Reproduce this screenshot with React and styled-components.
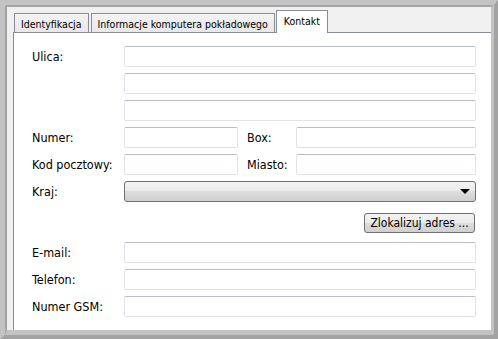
import React from "react";
import styled, { createGlobalStyle } from "styled-components";

const GlobalStyle = createGlobalStyle`
  html, body {
    margin: 0;
    padding: 0;
    background: #f0f0f0;
  }
  body {
    font-family: "DejaVu Sans Condensed", "DejaVu Sans", sans-serif;
    font-stretch: condensed;
    font-size: 12.5px;
    color: #000;
  }
`;

const Frame = styled.div`
  box-sizing: border-box;
  width: 498px;
  height: 339px;
  border-style: solid;
  border-width: 5px 4px 4px 5px;
  border-color: #c3c3c3 #a3a3a3 #a3a3a3 #c3c3c3;
`;

const Bevel = styled.div`
  box-sizing: border-box;
  height: 100%;
  border-style: solid;
  border-width: 2px 3px 5px 2px;
  border-color: #a3a3a3 #c3c3c3 #c3c3c3 #a3a3a3;
  background: #f0f0f0;
  display: flex;
  flex-direction: column;
  padding-left: 6px;
`;

const TabStrip = styled.div`
  height: 25px;
  display: flex;
  align-items: flex-end;
  padding-left: 1px;
  gap: 2px;
  position: relative;
  z-index: 1;
`;

const Tab = styled.div`
  box-sizing: border-box;
  height: ${({ $active }) => ($active ? "23px" : "19px")};
  margin-bottom: ${({ $active }) => ($active ? "-1px" : "0")};
  margin-left: ${({ $active }) => ($active ? "-1px" : "0")};
  padding: ${({ $active }) => ($active ? "3px 7px 0" : "3px 6px 0")};
  border: 1px solid #898c95;
  border-bottom: none;
  background: ${({ $active }) =>
    $active ? "#ffffff" : "linear-gradient(#f3f3f3, #e8e8e8)"};
  white-space: nowrap;
  font-size: 10.5px;
  line-height: 14px;
`;

const Panel = styled.div`
  flex: 1;
  background: #fff;
  border-top: 1px solid #898c95;
  border-left: 1px solid #898c95;
  padding: 13px 15px 0 18px;
`;

const Form = styled.div`
  display: grid;
  grid-template-columns: 92px 1fr;
  row-gap: 6px;
  align-items: center;
`;

const Label = styled.div`
  line-height: 15px;
  white-space: nowrap;
`;

const Input = styled.div`
  box-sizing: border-box;
  height: 21px;
  grid-column: ${({ $full }) => ($full ? "2" : "auto")};
  border: 1px solid #dfe3ea;
  border-top-color: #b9bec7;
  border-radius: 2px;
  background: #fff;
`;

const SplitRow = styled.div`
  display: grid;
  grid-template-columns: 114px 40px 1fr;
  column-gap: 9px;
  align-items: center;
`;

const Select = styled.div`
  box-sizing: border-box;
  height: 21px;
  border: 1px solid #707070;
  border-radius: 3px;
  background: linear-gradient(#f2f2f2 0%, #ebebeb 50%, #dddddd 50%, #cfcfcf 100%);
  display: flex;
  align-items: center;
  justify-content: flex-end;
  padding-right: 5px;
`;

const Arrow = styled.div`
  width: 0;
  height: 0;
  border-left: 5px solid transparent;
  border-right: 5px solid transparent;
  border-top: 5px solid #000;
`;

const ButtonRow = styled.div`
  grid-column: 1 / span 2;
  display: flex;
  justify-content: flex-end;
  padding: 5px 1px 3px 0;
`;

const Button = styled.div`
  box-sizing: border-box;
  height: 20px;
  width: 111px;
  border: 1px solid #707070;
  border-radius: 3px;
  background: linear-gradient(#f2f2f2 0%, #ebebeb 50%, #dddddd 50%, #cfcfcf 100%);
  display: flex;
  align-items: center;
  justify-content: center;
  font-size: 12px;
  line-height: 14px;
  white-space: nowrap;
`;

const App = () => (
  <>
    <GlobalStyle />
    <Frame>
      <Bevel>
        <TabStrip>
          <Tab>Identyfikacja</Tab>
          <Tab>Informacje komputera pokładowego</Tab>
          <Tab $active>Kontakt</Tab>
        </TabStrip>
        <Panel>
          <Form>
            <Label>Ulica:</Label>
            <Input />
            <Input $full />
            <Input $full />
            <Label>Numer:</Label>
            <SplitRow>
              <Input />
              <Label>Box:</Label>
              <Input />
            </SplitRow>
            <Label>Kod pocztowy:</Label>
            <SplitRow>
              <Input />
              <Label>Miasto:</Label>
              <Input />
            </SplitRow>
            <Label>Kraj:</Label>
            <Select>
              <Arrow />
            </Select>
            <ButtonRow>
              <Button>Zlokalizuj adres ...</Button>
            </ButtonRow>
            <Label>E-mail:</Label>
            <Input />
            <Label>Telefon:</Label>
            <Input />
            <Label>Numer GSM:</Label>
            <Input />
          </Form>
        </Panel>
      </Bevel>
    </Frame>
  </>
);

export default App;
